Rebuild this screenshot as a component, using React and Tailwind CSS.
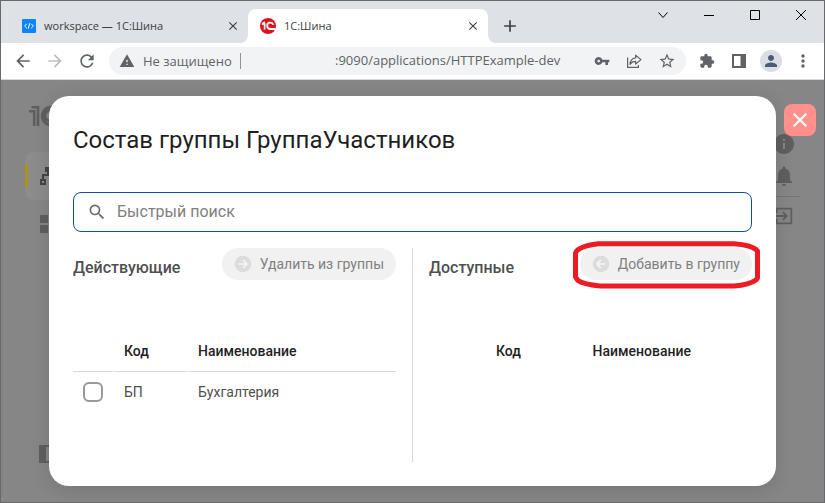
import React, { useState } from 'react';
import {
  MdArrowBack,
  MdArrowForward,
  MdRefresh,
  MdWarning,
  MdVpnKey,
  MdStarBorder,
  MdExtension,
  MdPerson,
  MdMoreVert,
  MdInfo,
  MdNotifications,
  MdExitToApp,
  MdSearch,
  MdClose,
  MdAdd,
} from 'react-icons/md';

const members = [{ code: 'БП', name: 'Бухгалтерия' }];

const CodeFavicon = () => (
  <svg viewBox="0 0 14 14" className="h-3.5 w-3.5 shrink-0" aria-hidden="true">
    <rect width="14" height="14" rx="1" fill="#0a84ff" />
    <path d="M4.8 4.8 2.6 7l2.2 2.2M9.2 4.8 11.4 7 9.2 9.2M7.8 4.2 6.2 9.8" fill="none" stroke="#fff" strokeWidth="1" />
  </svg>
);

const OneCFavicon = () => (
  <svg viewBox="0 0 16 16" className="h-4 w-4 shrink-0" aria-hidden="true">
    <circle cx="8" cy="8" r="8" fill="#d9161f" />
    <path d="M1.8 6H4.6V11.6M2.6 5.4 5 4.4" fill="none" stroke="#fff" strokeWidth="1.7" />
    <path d="M13.4 6.8A3.2 3.2 0 1 0 10.4 11H15.4" fill="none" stroke="#fff" strokeWidth="1.8" />
  </svg>
);

const ShareIcon = () => (
  <svg viewBox="0 0 16 16" className="h-4 w-4" fill="none" stroke="#5f6368" strokeWidth="1.2" aria-hidden="true">
    <path d="M1.6 4.5V14.4H12.4V12" />
    <path d="M9.6 2.2 15 6.6 9.6 11V8.4C7 8.4 5.2 9.4 4 11.4 4.2 7.6 6.2 5.2 9.6 4.8Z" strokeLinejoin="round" />
  </svg>
);

const SidePanelIcon = () => (
  <svg viewBox="0 0 14 14" className="h-3.5 w-3.5" aria-hidden="true">
    <path d="M0 0H14V14H0ZM2 2V12H8.5V2Z" fill="#5f6368" fillRule="evenodd" />
  </svg>
);

const ArrowCircle = ({ flip }) => (
  <svg viewBox="0 0 18 18" className={`h-[18px] w-[18px] ${flip ? 'rotate-180' : ''}`} aria-hidden="true">
    <circle cx="9" cy="9" r="8.3" fill="#dcdcdc" />
    <path d="M4.6 9H12.6M9.2 5.2 13 9 9.2 12.8" fill="none" stroke="#f5f5f5" strokeWidth="1.7" />
  </svg>
);

const WindowControls = () => (
  <div className="flex h-7 items-center text-black">
    <button aria-label="Поиск вкладок" className="flex w-[46px] justify-center">
      <svg viewBox="0 0 12 12" className="h-3 w-3" fill="none" stroke="currentColor">
        <path d="M1.5 3.5 6 8.5 10.5 3.5" />
      </svg>
    </button>
    <button aria-label="Свернуть" className="flex w-[46px] justify-center">
      <svg viewBox="0 0 10 10" className="h-2.5 w-2.5" fill="none" stroke="currentColor">
        <path d="M0 5.5H10" />
      </svg>
    </button>
    <button aria-label="Развернуть" className="flex w-[46px] justify-center">
      <svg viewBox="0 0 10 10" className="h-2.5 w-2.5" fill="none" stroke="currentColor">
        <path d="M.5 .5H9.5V9.5H.5Z" />
      </svg>
    </button>
    <button aria-label="Закрыть окно" className="flex w-[46px] justify-center">
      <svg viewBox="0 0 10 10" className="h-2.5 w-2.5" fill="none" stroke="currentColor">
        <path d="M0 0 10 10M10 0 0 10" />
      </svg>
    </button>
  </div>
);

const TabStrip = () => (
  <div className="flex h-[42px] items-start bg-[#dee1e6] text-[11px] text-[#3c4043]">
    <div className="mt-2 flex h-[34px] w-[247px] items-center gap-2 pl-[21px] pr-2">
      <CodeFavicon />
      <span className="flex-1 truncate">workspace — 1С:Шина</span>
      <button aria-label="Закрыть вкладку">
        <MdClose className="h-3.5 w-3.5" />
      </button>
    </div>
    <div className="relative mt-2 flex h-[34px] w-60 items-center gap-2 rounded-t-lg bg-white px-3 pr-2">
      <svg viewBox="0 0 8 8" className="absolute bottom-0 -left-2 h-2 w-2" aria-hidden="true">
        <path d="M8 0V8H0A8 8 0 0 0 8 0Z" fill="#fff" />
      </svg>
      <svg viewBox="0 0 8 8" className="absolute -right-2 bottom-0 h-2 w-2" aria-hidden="true">
        <path d="M0 0V8H8A8 8 0 0 1 0 0Z" fill="#fff" />
      </svg>
      <OneCFavicon />
      <span className="flex-1 truncate">1С:Шина</span>
      <button aria-label="Закрыть вкладку">
        <MdClose className="h-3.5 w-3.5" />
      </button>
    </div>
    <button aria-label="Новая вкладка" className="mt-2 ml-3 flex h-[34px] items-center">
      <MdAdd className="h-5 w-5" />
    </button>
    <div className="flex-1" />
    <WindowControls />
  </div>
);

const Toolbar = () => (
  <div className="flex h-[37px] items-center border-b border-[#d5d7da] bg-white pl-3 text-[#5f6368]">
    <div className="flex w-24 items-center gap-3">
      <button aria-label="Назад">
        <MdArrowBack className="h-5 w-5" />
      </button>
      <button aria-label="Вперёд" className="text-[#bcbec1]">
        <MdArrowForward className="h-5 w-5" />
      </button>
      <button aria-label="Обновить">
        <MdRefresh className="h-5 w-5" />
      </button>
    </div>
    <div className="flex h-7 flex-1 items-center rounded-full bg-[#f1f3f4] px-2.5 text-[13px]">
      <MdWarning className="h-4 w-4" />
      <span className="ml-2 w-[98px] border-r border-[#8f9296] leading-4 whitespace-nowrap">Не защищено</span>
      <span className="ml-[94px] flex-1 whitespace-nowrap">:9090/applications/HTTPExample-dev</span>
      <div className="flex items-center gap-4">
        <button aria-label="Пароли">
          <MdVpnKey className="h-4 w-4" />
        </button>
        <button aria-label="Поделиться">
          <ShareIcon />
        </button>
        <button aria-label="Добавить в закладки">
          <MdStarBorder className="h-[18px] w-[18px]" />
        </button>
      </div>
    </div>
    <div className="flex items-center gap-2.5 px-2.5">
      <button aria-label="Расширения" className="flex w-[22px] justify-center">
        <MdExtension className="h-4 w-4" />
      </button>
      <button aria-label="Боковая панель" className="flex w-[22px] justify-center">
        <SidePanelIcon />
      </button>
      <button aria-label="Профиль" className="flex h-[22px] w-[22px] items-center justify-center rounded-full bg-[#dadde3] text-[#4d5a73]">
        <MdPerson className="h-[18px] w-[18px]" />
      </button>
      <button aria-label="Меню" className="flex w-[22px] justify-center">
        <MdMoreVert className="h-5 w-5" />
      </button>
    </div>
  </div>
);

// Dimmed application behind the dialog
const AppShell = () => (
  <div className="col-start-1 row-start-1 flex justify-between bg-[#868686] text-[#5f5f5f]" aria-hidden="true">
    <div className="flex w-24 flex-col pl-6">
      <svg viewBox="0 0 40 22" className="mt-6 ml-1 h-[22px] w-10" fill="none" stroke="currentColor">
        <path d="M0 7.2H5.2V22M2.5 3.2H9V22" strokeWidth="2.6" />
        <path d="M29 6A9 9 0 1 0 20.5 20.8H38M25 8.5A5.2 5.2 0 1 0 20.5 17H38" strokeWidth="2.8" />
      </svg>
      <div className="mt-[26px] flex h-12 items-center rounded-l-lg bg-[#8c8c8c] text-[#454545]">
        <div className="h-6 w-[3px] shrink-0 rounded-r-xs bg-[#a8931c]" />
        <svg viewBox="0 0 18 18" className="ml-3 h-[18px] w-[18px]">
          <path d="M5 0H11V5H9V9H4V12H6V18H0V12H2V7H7V5H5ZM2 14V16H4V14Z" fill="currentColor" fillRule="evenodd" />
        </svg>
      </div>
      <svg viewBox="0 0 18 18" className="mt-[15px] ml-[15px] h-[18px] w-[18px]">
        <path d="M0 0H8V8H0ZM10 0H18V8H10ZM0 10H8V18H0ZM10 10H18V18H10Z" fill="currentColor" />
      </svg>
      <div className="flex-1" />
      <svg viewBox="0 0 20 18" className="mb-[39px] ml-3.5 h-[18px] w-5">
        <path d="M0 0H20V18H0ZM7 2V16H18V2Z" fill="currentColor" fillRule="evenodd" />
      </svg>
    </div>
    <div className="flex w-16 flex-col items-end pt-[52px] pr-6">
      <div className="flex w-8 flex-col items-center">
        <MdInfo className="h-6 w-6" />
        <MdNotifications className="mt-2 h-6 w-6" />
        <div className="mt-2 h-px w-8 bg-[#767676]" />
        <MdExitToApp className="mt-2 h-[22px] w-[22px]" />
      </div>
    </div>
  </div>
);

const GroupButton = ({ flip, children }) => (
  <button disabled className="flex h-8 items-center gap-2 rounded-full bg-[#f1f1f1] px-3 text-sm whitespace-nowrap text-[#808080]">
    <ArrowCircle flip={flip} />
    {children}
  </button>
);

// Hand-drawn red outline around the "add" button
const Highlight = () => (
  <svg viewBox="0 0 188 50" className="pointer-events-none absolute -top-2 -left-2 h-[50px] w-[188px]" fill="none" aria-hidden="true">
    <path
      d="M3.5 37V14C3.5 11 5 10 8 8.5C12 6 18 5 26 3.8H162C170 4.5 180 6 184 9.5L185.5 11V38L184 40C180 43 172 45.3 162 46H28C18 45 10 43.5 6 40.5Z"
      stroke="#ed1c24"
      strokeWidth="5"
      strokeLinejoin="round"
    />
  </svg>
);

const MembersTable = () => (
  <table className="mt-[50px] -ml-px w-[calc(100%+2px)] table-fixed border-separate border-spacing-x-px border-spacing-y-0 text-left text-sm">
    <thead>
      <tr className="h-[42px] text-[#1f1f1f]">
        <th className="w-10 border-b border-[#d8d8d8]" />
        <th className="w-[73px] border-b border-[#d8d8d8] px-2.5 font-medium">Код</th>
        <th className="border-b border-[#d8d8d8] px-2.5 font-medium">Наименование</th>
      </tr>
    </thead>
    <tbody>
      {members.map((m) => (
        <tr key={m.code} className="h-10 text-[#4f4f4f]">
          <td className="pl-2.5">
            <input
              type="checkbox"
              aria-label={m.name}
              className="block h-5 w-5 appearance-none rounded-md border-2 border-[#999] bg-white checked:bg-[#999]"
            />
          </td>
          <td className="px-2.5">{m.code}</td>
          <td className="px-2.5">{m.name}</td>
        </tr>
      ))}
    </tbody>
  </table>
);

const AvailableTable = () => (
  <table className="mt-[50px] w-full table-fixed text-left text-sm">
    <thead>
      <tr className="h-[42px] text-[#1f1f1f]">
        <th className="w-1/2 pl-[67px] font-medium">Код</th>
        <th className="w-1/2 pl-0.5 font-medium">Наименование</th>
      </tr>
    </thead>
  </table>
);

const GroupDialog = () => {
  const [search, setSearch] = useState('');

  return (
    <div className="z-10 col-start-1 row-start-1 flex py-4 pl-12">
      <div
        role="dialog"
        aria-labelledby="group-title"
        className="flex min-w-0 flex-1 flex-col rounded-[20px] bg-white p-6 shadow-[0_4px_20px_rgba(0,0,0,0.12)]"
      >
        <h1 id="group-title" className="text-2xl leading-10 text-[#1f1f1f]">
          Состав группы ГруппаУчастников
        </h1>

        <label className="mt-8 flex h-10 items-center gap-2.5 rounded-lg border border-[#0b4f9e] px-[13px]">
          <MdSearch className="h-5 w-5 shrink-0 text-[#6b6b6b]" />
          <input
            type="text"
            aria-label="Быстрый поиск"
            placeholder="Быстрый поиск"
            value={search}
            onChange={(e) => setSearch(e.target.value)}
            className="min-w-0 flex-1 text-base text-[#1f1f1f] outline-none placeholder:text-[#808080]"
          />
        </label>

        <div className="mt-4 flex flex-1 gap-4">
          <section className="min-w-0 flex-1">
            <div className="flex items-end justify-between">
              <h2 className="text-base font-medium text-[#4f4f4f]">Действующие</h2>
              <GroupButton>Удалить из группы</GroupButton>
            </div>
            <MembersTable />
          </section>
          <div className="w-px bg-[#d8d8d8]" />
          <section className="min-w-0 flex-1">
            <div className="flex items-end justify-between">
              <h2 className="text-base font-medium text-[#4f4f4f]">Доступные</h2>
              <div className="relative">
                <GroupButton flip>Добавить в группу</GroupButton>
                <Highlight />
              </div>
            </div>
            <AvailableTable />
          </section>
        </div>
      </div>
      <div className="w-12 pt-2 pl-2">
        <button aria-label="Закрыть" className="flex h-8 w-8 items-center justify-center rounded-lg bg-[#ff908b] text-white">
          <MdClose className="h-6 w-6" />
        </button>
      </div>
    </div>
  );
};

const App = () => (
  <div className="flex min-h-screen flex-col border border-[#69696b] font-['Open_Sans',sans-serif]">
    <TabStrip />
    <Toolbar />
    <main className="grid flex-1 font-[Roboto,sans-serif]">
      <AppShell />
      <GroupDialog />
    </main>
  </div>
);

export default App;
